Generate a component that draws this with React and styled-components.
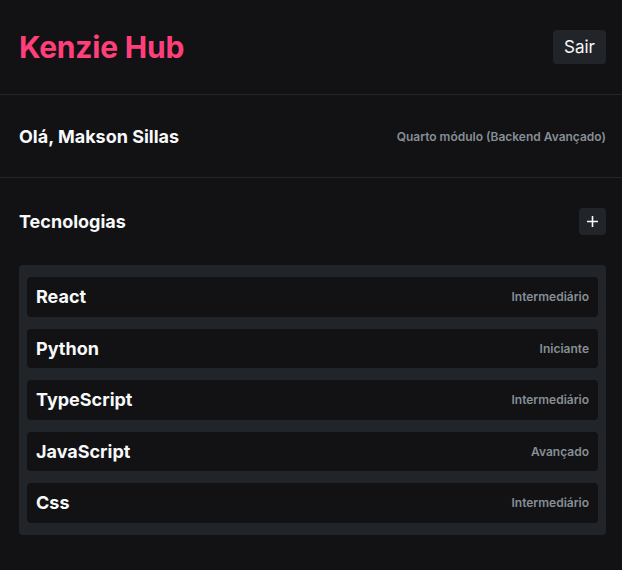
import React from "react";
import styled, { createGlobalStyle } from "styled-components";

const Global = createGlobalStyle`
  html, body { margin: 0; padding: 0; background: #121214; }
  body { font-family: Inter, "Noto Sans", sans-serif; color: #F8F9FA; }
  * { box-sizing: border-box; }
`;

const Page = styled.div`
  min-height: 570px;
  background: #121214;
`;

const Section = styled.div`
  padding: 0 16px 0 19px;
  border-bottom: ${(p) => (p.$line ? "1px solid #212529" : "none")};
`;

const Bar = styled.div`
  height: ${(p) => p.$h}px;
  display: flex;
  align-items: center;
  justify-content: space-between;
`;

const Logo = styled.h1`
  margin: 0;
  font-size: 30px;
  font-weight: 700;
  color: #FF3F7A;
  letter-spacing: -0.2px;
`;

const Button = styled.button`
  border: none;
  background: #212529;
  color: #F8F9FA;
  border-radius: 4px;
  font-family: inherit;
  font-size: 17px;
  height: 34px;
  padding: 0 11px;
  display: flex;
  align-items: center;
  justify-content: center;
`;

const IconButton = styled(Button)`
  width: 27px;
  height: 27px;
  padding: 0;
`;

const Title = styled.h2`
  margin: 0;
  font-size: 18px;
  font-weight: 700;
  color: #F8F9FA;
`;

const Muted = styled.span`
  font-size: 12px;
  font-weight: 600;
  color: #868E96;
`;

const TechHead = styled.div`
  display: flex;
  align-items: center;
  justify-content: space-between;
  padding-top: 30px;
  margin-bottom: 30px;
`;

const List = styled.ul`
  list-style: none;
  margin: 0;
  padding: 12px 8px;
  background: #212529;
  border-radius: 4px;
  display: flex;
  flex-direction: column;
  gap: 12px;
`;

const Item = styled.li`
  height: 39.5px;
  background: #121214;
  border-radius: 4px;
  padding: 0 9px;
  display: flex;
  align-items: center;
  justify-content: space-between;
`;

const techs = [
  { name: "React", level: "Intermediário" },
  { name: "Python", level: "Iniciante" },
  { name: "TypeScript", level: "Intermediário" },
  { name: "JavaScript", level: "Avançado" },
  { name: "Css", level: "Intermediário" },
];

export default function App() {
  return (
    <Page>
      <Global />
      <Section $line>
        <Bar $h={94}>
          <Logo>Kenzie Hub</Logo>
          <Button>Sair</Button>
        </Bar>
      </Section>
      <Section $line>
        <Bar $h={82}>
          <Title>Olá, Makson Sillas</Title>
          <Muted>Quarto módulo (Backend Avançado)</Muted>
        </Bar>
      </Section>
      <Section>
        <TechHead>
          <Title>Tecnologias</Title>
          <IconButton aria-label="Adicionar">
            <svg width="11" height="11" viewBox="0 0 11 11">
              <path d="M5.5 0v11M0 5.5h11" stroke="#F8F9FA" strokeWidth="1.6" />
            </svg>
          </IconButton>
        </TechHead>
        <List>
          {techs.map((t) => (
            <Item key={t.name}>
              <Title>{t.name}</Title>
              <Muted>{t.level}</Muted>
            </Item>
          ))}
        </List>
      </Section>
    </Page>
  );
}
